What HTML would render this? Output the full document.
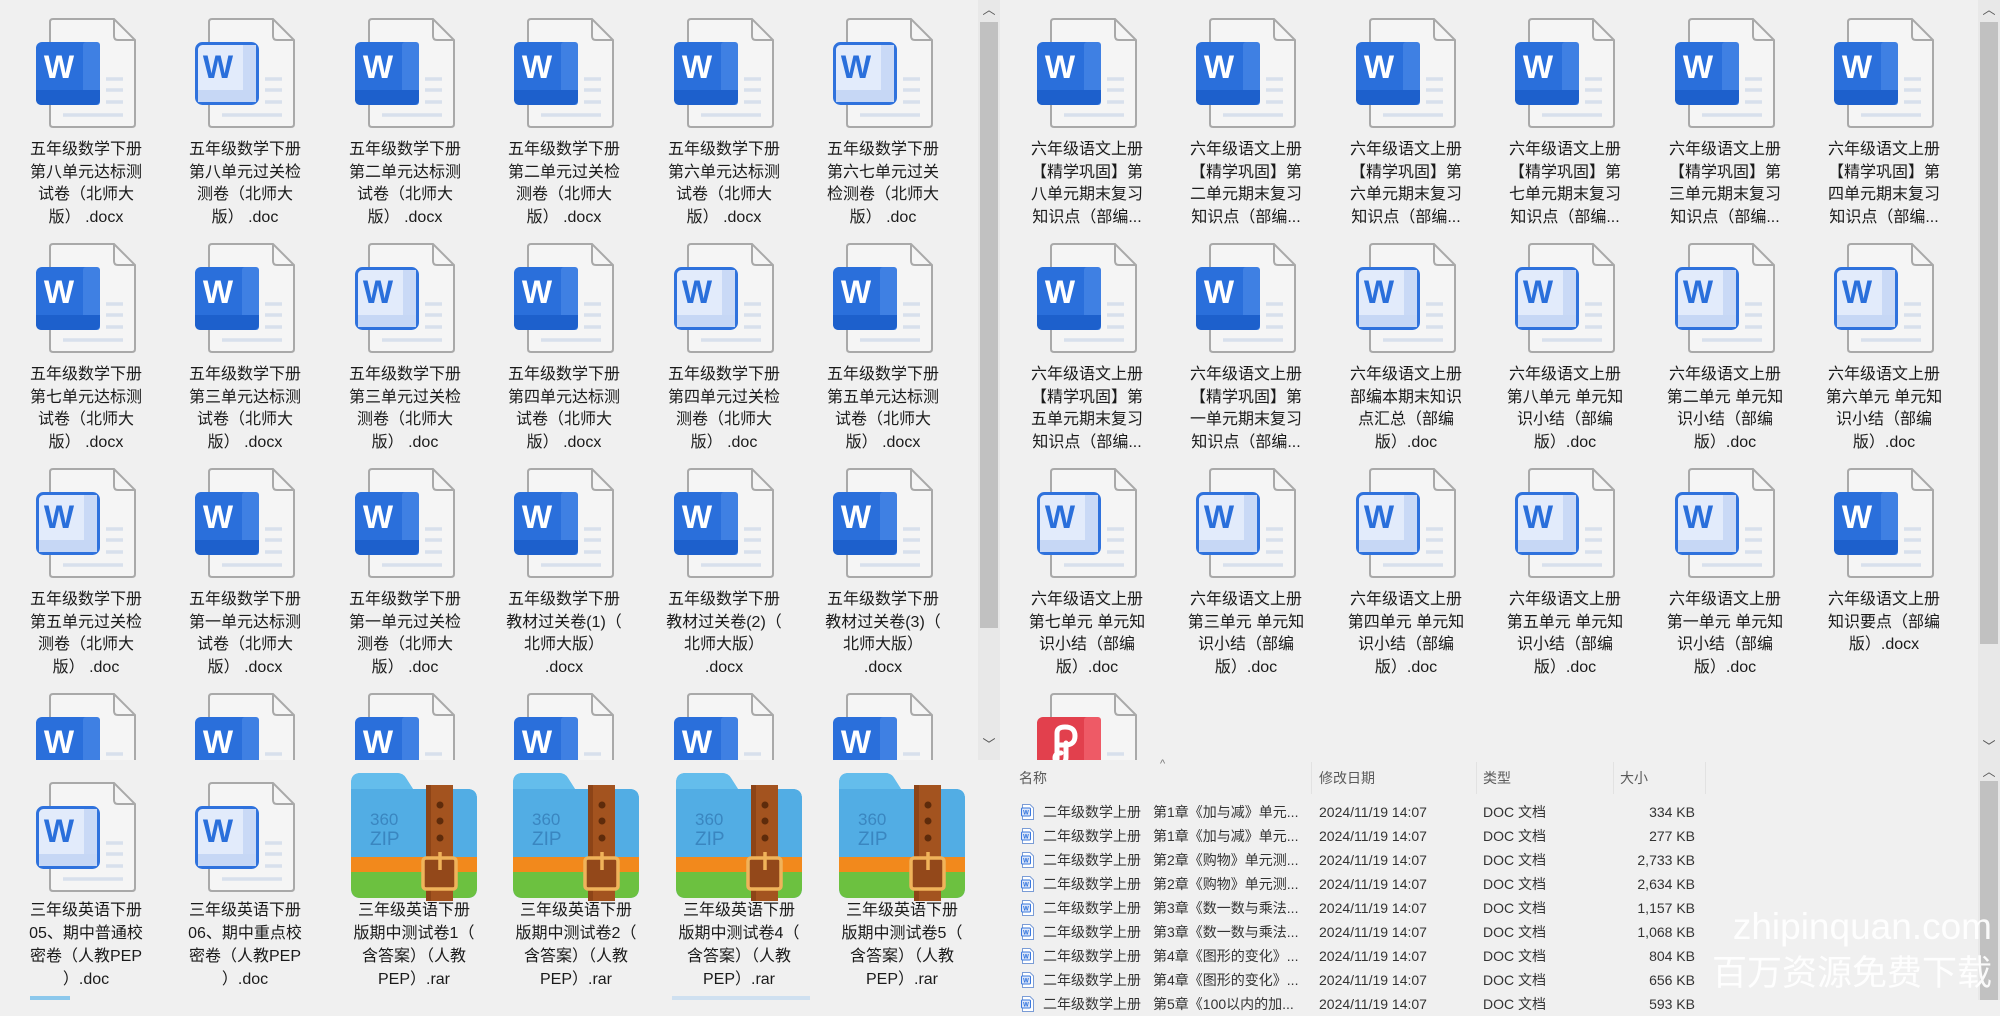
<!DOCTYPE html>
<html><head><meta charset="utf-8">
<style>
*{margin:0;padding:0;box-sizing:border-box}
body{width:2000px;height:1000px;background:#f0f0f0;position:relative;overflow:hidden;font-family:"Liberation Sans","Noto Sans CJK SC",sans-serif;color:#1a1a1a}
.pane{position:absolute;overflow:hidden}
.ic{position:absolute;width:100px;height:112px}
.zp{position:absolute;width:126px;height:128px}
.lb{position:absolute;width:170px;text-align:center;font-size:16px;line-height:22.5px;white-space:nowrap}
.sb{position:absolute;background:#e8e8e8}
.th{position:absolute;background:#c1c1c1}
.ar{position:absolute;font-size:13px;color:#555;width:22px;text-align:center;line-height:14px}
.row{position:absolute;left:0;width:2000px;height:24px;font-size:14px;line-height:24px;color:#333;white-space:nowrap}
.row span{position:absolute}
.hd{position:absolute;top:766px;font-size:14px;color:#5a5a5a;line-height:24px}
.sep{position:absolute;top:762px;width:1px;height:32px;background:#e2e2e2}
</style></head><body>
<svg width="0" height="0" style="position:absolute">
<defs>
<symbol id="pg" viewBox="0 0 100 112">
<path d="M14,4 q0,-3 3,-3 H78 L99,22 V106 q0,3 -3,3 H17 q-3,0 -3,-3 Z" fill="#f5f5f5" stroke="#a9a9a9" stroke-width="2"/>
<path d="M78,1 V18 q0,4 4,4 H99" fill="none" stroke="#a9a9a9" stroke-width="2"/>
<path d="M70,61 H87 M70,72 H87 M70,84 H87 M27,97 H87" stroke="#d8e0ec" stroke-width="3.5"/>
</symbol>
<symbol id="doc" viewBox="0 0 100 112">
<use href="#pg"/>
<rect x="0" y="24" width="64" height="63" rx="6" fill="#2a6fdb"/>
<rect x="47" y="24" width="17" height="63" rx="3" fill="#3f80e3"/>
<path d="M0,72 H64 V81 q0,6 -6,6 H6 q-6,0 -6,-6 Z" fill="#1d60cc"/>
<text x="23" y="60" text-anchor="middle" font-family="Liberation Sans" font-weight="bold" font-size="32" fill="#fff">W</text>
</symbol>
<symbol id="doco" viewBox="0 0 100 112">
<use href="#pg"/>
<rect x="1.5" y="25.5" width="61" height="60" rx="6" fill="#e2ebfb" stroke="#2f72dd" stroke-width="3"/>
<rect x="48" y="27" width="13" height="57" fill="#c9d9f6"/>
<rect x="3" y="72" width="58" height="12" fill="#c6d7f5"/>
<text x="23" y="60" text-anchor="middle" font-family="Liberation Sans" font-weight="bold" font-size="32" fill="#2a6fdb">W</text>
</symbol>
<symbol id="pdf" viewBox="0 0 100 112">
<use href="#pg"/>
<rect x="0" y="24" width="64" height="63" rx="6" fill="#e2404d"/>
<rect x="47" y="24" width="17" height="63" rx="3" fill="#ee5a66"/>
<path d="M20,66 V40 q0,-6 8,-6 q10,0 10,9 q0,9 -10,9 h-6 M24,60 q-6,0 -6,5 q0,5 6,5 q5,0 5,-6 V50" fill="none" stroke="#fff" stroke-width="5" stroke-linecap="round"/>
</symbol>
<symbol id="zip" viewBox="0 0 126 128">
<clipPath id="zc"><path d="M0,10 q0,-10 10,-10 H46 q6,0 9,5 L62,16 H116 q10,0 10,10 V115 q0,10 -10,10 H10 q-10,0 -10,-10 Z"/></clipPath>
<g clip-path="url(#zc)">
<rect width="126" height="128" fill="#56b1e6"/>
<rect y="0" width="126" height="30" fill="#64bdec"/>
<rect y="16" width="126" height="68" fill="#52ade4"/>
<rect y="84" width="126" height="16" fill="#f2891c"/>
<rect y="99" width="126" height="29" fill="#6cc140"/>
</g>
<rect x="75" y="12" width="27" height="116" fill="#a3531f"/>
<rect x="75" y="12" width="5" height="116" fill="#8d4417"/>
<circle cx="89" cy="32" r="3.5" fill="#5e2b0b"/><circle cx="89" cy="48" r="3.5" fill="#5e2b0b"/><circle cx="89" cy="65" r="3.5" fill="#5e2b0b"/>
<rect x="72" y="85" width="33" height="31" rx="3" fill="#93481a" stroke="#f0b35a" stroke-width="3.5"/>
<path d="M89,79 V97" stroke="#f0b35a" stroke-width="3.5"/>
<text x="19" y="52" font-family="Liberation Sans" font-size="17" fill="#3a86c0">360</text>
<text x="19" y="72" font-family="Liberation Sans" font-size="19" fill="#3a86c0">ZIP</text>
</symbol>
<symbol id="sm" viewBox="0 0 14 18">
<path d="M1.5,1.5 H9 L12.5,5 V16.5 H1.5 Z" fill="#fff" stroke="#7a9cd6" stroke-width="1"/>
<rect x="0.5" y="5" width="9" height="8" rx="1" fill="#dbe6fa" stroke="#3a78de" stroke-width="1"/>
<text x="5" y="11.5" text-anchor="middle" font-family="Liberation Sans" font-weight="bold" font-size="6" fill="#2a6fdb">W</text>
</symbol>
</defs></svg>

<!-- LEFT TOP PANE -->
<div class="pane" style="left:0;top:0;width:978px;height:760px">
<svg class="ic" style="left:36px;top:18px"><use href="#doc"/></svg>
<svg class="ic" style="left:195px;top:18px"><use href="#doco"/></svg>
<svg class="ic" style="left:355px;top:18px"><use href="#doc"/></svg>
<svg class="ic" style="left:514px;top:18px"><use href="#doc"/></svg>
<svg class="ic" style="left:674px;top:18px"><use href="#doc"/></svg>
<svg class="ic" style="left:833px;top:18px"><use href="#doco"/></svg>
<div class="lb" style="left:1px;top:139px">五年级数学下册<br>第八单元达标测<br>试卷（北师大<br>版） .docx</div>
<div class="lb" style="left:160px;top:139px">五年级数学下册<br>第八单元过关检<br>测卷（北师大<br>版） .doc</div>
<div class="lb" style="left:320px;top:139px">五年级数学下册<br>第二单元达标测<br>试卷（北师大<br>版） .docx</div>
<div class="lb" style="left:479px;top:139px">五年级数学下册<br>第二单元过关检<br>测卷（北师大<br>版） .docx</div>
<div class="lb" style="left:639px;top:139px">五年级数学下册<br>第六单元达标测<br>试卷（北师大<br>版） .docx</div>
<div class="lb" style="left:798px;top:139px">五年级数学下册<br>第六七单元过关<br>检测卷（北师大<br>版） .doc</div>

<svg class="ic" style="left:36px;top:243px"><use href="#doc"/></svg>
<svg class="ic" style="left:195px;top:243px"><use href="#doc"/></svg>
<svg class="ic" style="left:355px;top:243px"><use href="#doco"/></svg>
<svg class="ic" style="left:514px;top:243px"><use href="#doc"/></svg>
<svg class="ic" style="left:674px;top:243px"><use href="#doco"/></svg>
<svg class="ic" style="left:833px;top:243px"><use href="#doc"/></svg>
<div class="lb" style="left:1px;top:364px">五年级数学下册<br>第七单元达标测<br>试卷（北师大<br>版） .docx</div>
<div class="lb" style="left:160px;top:364px">五年级数学下册<br>第三单元达标测<br>试卷（北师大<br>版） .docx</div>
<div class="lb" style="left:320px;top:364px">五年级数学下册<br>第三单元过关检<br>测卷（北师大<br>版） .doc</div>
<div class="lb" style="left:479px;top:364px">五年级数学下册<br>第四单元达标测<br>试卷（北师大<br>版） .docx</div>
<div class="lb" style="left:639px;top:364px">五年级数学下册<br>第四单元过关检<br>测卷（北师大<br>版） .doc</div>
<div class="lb" style="left:798px;top:364px">五年级数学下册<br>第五单元达标测<br>试卷（北师大<br>版） .docx</div>

<svg class="ic" style="left:36px;top:468px"><use href="#doco"/></svg>
<svg class="ic" style="left:195px;top:468px"><use href="#doc"/></svg>
<svg class="ic" style="left:355px;top:468px"><use href="#doc"/></svg>
<svg class="ic" style="left:514px;top:468px"><use href="#doc"/></svg>
<svg class="ic" style="left:674px;top:468px"><use href="#doc"/></svg>
<svg class="ic" style="left:833px;top:468px"><use href="#doc"/></svg>
<div class="lb" style="left:1px;top:589px">五年级数学下册<br>第五单元过关检<br>测卷（北师大<br>版） .doc</div>
<div class="lb" style="left:160px;top:589px">五年级数学下册<br>第一单元达标测<br>试卷（北师大<br>版） .docx</div>
<div class="lb" style="left:320px;top:589px">五年级数学下册<br>第一单元过关检<br>测卷（北师大<br>版） .doc</div>
<div class="lb" style="left:479px;top:589px">五年级数学下册<br>教材过关卷(1)（<br>北师大版）<br>.docx</div>
<div class="lb" style="left:639px;top:589px">五年级数学下册<br>教材过关卷(2)（<br>北师大版）<br>.docx</div>
<div class="lb" style="left:798px;top:589px">五年级数学下册<br>教材过关卷(3)（<br>北师大版）<br>.docx</div>

<svg class="ic" style="left:36px;top:693px"><use href="#doc"/></svg>
<svg class="ic" style="left:195px;top:693px"><use href="#doc"/></svg>
<svg class="ic" style="left:355px;top:693px"><use href="#doc"/></svg>
<svg class="ic" style="left:514px;top:693px"><use href="#doc"/></svg>
<svg class="ic" style="left:674px;top:693px"><use href="#doc"/></svg>
<svg class="ic" style="left:833px;top:693px"><use href="#doc"/></svg>
</div>
<div class="sb" style="left:978px;top:0;width:22px;height:760px"></div>
<div class="th" style="left:980px;top:22px;width:18px;height:606px"></div>
<div class="ar" style="left:978px;top:3px">︿</div>
<div class="ar" style="left:978px;top:738px">﹀</div>

<!-- RIGHT TOP PANE -->
<div class="pane" style="left:1000px;top:0;width:978px;height:760px">
<svg class="ic" style="left:37px;top:18px"><use href="#doc"/></svg>
<svg class="ic" style="left:196px;top:18px"><use href="#doc"/></svg>
<svg class="ic" style="left:356px;top:18px"><use href="#doc"/></svg>
<svg class="ic" style="left:515px;top:18px"><use href="#doc"/></svg>
<svg class="ic" style="left:675px;top:18px"><use href="#doc"/></svg>
<svg class="ic" style="left:834px;top:18px"><use href="#doc"/></svg>
<div class="lb" style="left:2px;top:139px">六年级语文上册<br>【精学巩固】第<br>八单元期末复习<br>知识点（部编...</div>
<div class="lb" style="left:161px;top:139px">六年级语文上册<br>【精学巩固】第<br>二单元期末复习<br>知识点（部编...</div>
<div class="lb" style="left:321px;top:139px">六年级语文上册<br>【精学巩固】第<br>六单元期末复习<br>知识点（部编...</div>
<div class="lb" style="left:480px;top:139px">六年级语文上册<br>【精学巩固】第<br>七单元期末复习<br>知识点（部编...</div>
<div class="lb" style="left:640px;top:139px">六年级语文上册<br>【精学巩固】第<br>三单元期末复习<br>知识点（部编...</div>
<div class="lb" style="left:799px;top:139px">六年级语文上册<br>【精学巩固】第<br>四单元期末复习<br>知识点（部编...</div>

<svg class="ic" style="left:37px;top:243px"><use href="#doc"/></svg>
<svg class="ic" style="left:196px;top:243px"><use href="#doc"/></svg>
<svg class="ic" style="left:356px;top:243px"><use href="#doco"/></svg>
<svg class="ic" style="left:515px;top:243px"><use href="#doco"/></svg>
<svg class="ic" style="left:675px;top:243px"><use href="#doco"/></svg>
<svg class="ic" style="left:834px;top:243px"><use href="#doco"/></svg>
<div class="lb" style="left:2px;top:364px">六年级语文上册<br>【精学巩固】第<br>五单元期末复习<br>知识点（部编...</div>
<div class="lb" style="left:161px;top:364px">六年级语文上册<br>【精学巩固】第<br>一单元期末复习<br>知识点（部编...</div>
<div class="lb" style="left:321px;top:364px">六年级语文上册<br>部编本期末知识<br>点汇总（部编<br>版）.doc</div>
<div class="lb" style="left:480px;top:364px">六年级语文上册<br>第八单元 单元知<br>识小结（部编<br>版）.doc</div>
<div class="lb" style="left:640px;top:364px">六年级语文上册<br>第二单元 单元知<br>识小结（部编<br>版）.doc</div>
<div class="lb" style="left:799px;top:364px">六年级语文上册<br>第六单元 单元知<br>识小结（部编<br>版）.doc</div>

<svg class="ic" style="left:37px;top:468px"><use href="#doco"/></svg>
<svg class="ic" style="left:196px;top:468px"><use href="#doco"/></svg>
<svg class="ic" style="left:356px;top:468px"><use href="#doco"/></svg>
<svg class="ic" style="left:515px;top:468px"><use href="#doco"/></svg>
<svg class="ic" style="left:675px;top:468px"><use href="#doco"/></svg>
<svg class="ic" style="left:834px;top:468px"><use href="#doc"/></svg>
<div class="lb" style="left:2px;top:589px">六年级语文上册<br>第七单元 单元知<br>识小结（部编<br>版）.doc</div>
<div class="lb" style="left:161px;top:589px">六年级语文上册<br>第三单元 单元知<br>识小结（部编<br>版）.doc</div>
<div class="lb" style="left:321px;top:589px">六年级语文上册<br>第四单元 单元知<br>识小结（部编<br>版）.doc</div>
<div class="lb" style="left:480px;top:589px">六年级语文上册<br>第五单元 单元知<br>识小结（部编<br>版）.doc</div>
<div class="lb" style="left:640px;top:589px">六年级语文上册<br>第一单元 单元知<br>识小结（部编<br>版）.doc</div>
<div class="lb" style="left:799px;top:589px">六年级语文上册<br>知识要点（部编<br>版）.docx</div>

<svg class="ic" style="left:37px;top:693px"><use href="#pdf"/></svg>
</div>
<div class="sb" style="left:1978px;top:0;width:22px;height:762px"></div>
<div class="th" style="left:1980px;top:22px;width:18px;height:622px"></div>
<div class="ar" style="left:1978px;top:3px">︿</div>
<div class="ar" style="left:1978px;top:740px">﹀</div>

<!-- BOTTOM LEFT PANE -->
<div class="pane" style="left:0;top:762px;width:1000px;height:238px">
<svg class="ic" style="left:36px;top:20px"><use href="#doco"/></svg>
<svg class="ic" style="left:195px;top:20px"><use href="#doco"/></svg>
<svg class="zp" style="left:351px;top:11px"><use href="#zip"/></svg>
<svg class="zp" style="left:513px;top:11px"><use href="#zip"/></svg>
<svg class="zp" style="left:676px;top:11px"><use href="#zip"/></svg>
<svg class="zp" style="left:839px;top:11px"><use href="#zip"/></svg>
<div class="lb" style="left:1px;top:137px;line-height:23px">三年级英语下册<br>05、期中普通校<br>密卷（人教PEP<br>）.doc</div>
<div class="lb" style="left:160px;top:137px;line-height:23px">三年级英语下册<br>06、期中重点校<br>密卷（人教PEP<br>）.doc</div>
<div class="lb" style="left:329px;top:137px;line-height:23px">三年级英语下册<br>版期中测试卷1（<br>含答案）（人教<br>PEP）.rar</div>
<div class="lb" style="left:491px;top:137px;line-height:23px">三年级英语下册<br>版期中测试卷2（<br>含答案）（人教<br>PEP）.rar</div>
<div class="lb" style="left:654px;top:137px;line-height:23px">三年级英语下册<br>版期中测试卷4（<br>含答案）（人教<br>PEP）.rar</div>
<div class="lb" style="left:817px;top:137px;line-height:23px">三年级英语下册<br>版期中测试卷5（<br>含答案）（人教<br>PEP）.rar</div>
<div style="position:absolute;left:30px;top:234px;width:40px;height:6px;background:#8cc8ec"></div>
<div style="position:absolute;left:672px;top:234px;width:138px;height:6px;background:#cfe0f0"></div>
</div>

<!-- BOTTOM RIGHT DETAILS -->
<div style="position:absolute;left:1160px;top:758px;font-size:11px;color:#777">^</div>
<div class="hd" style="left:1019px">名称</div>
<div class="hd" style="left:1319px">修改日期</div>
<div class="hd" style="left:1483px">类型</div>
<div class="hd" style="left:1620px">大小</div>
<div class="sep" style="left:1311px"></div>
<div class="sep" style="left:1476px"></div>
<div class="sep" style="left:1613px"></div>
<div class="sep" style="left:1705px"></div>

<div class="row" style="top:800px"><svg style="position:absolute;left:1021px;top:3px;width:14px;height:18px"><use href="#sm"/></svg><span style="left:1043px">二年级数学上册</span><span style="left:1153px;width:146px;overflow:hidden">第1章《加与减》单元...</span><span style="left:1319px">2024/11/19 14:07</span><span style="left:1483px">DOC 文档</span><span style="right:305px">334 KB</span></div>
<div class="row" style="top:824px"><svg style="position:absolute;left:1021px;top:3px;width:14px;height:18px"><use href="#sm"/></svg><span style="left:1043px">二年级数学上册</span><span style="left:1153px;width:146px;overflow:hidden">第1章《加与减》单元...</span><span style="left:1319px">2024/11/19 14:07</span><span style="left:1483px">DOC 文档</span><span style="right:305px">277 KB</span></div>
<div class="row" style="top:848px"><svg style="position:absolute;left:1021px;top:3px;width:14px;height:18px"><use href="#sm"/></svg><span style="left:1043px">二年级数学上册</span><span style="left:1153px;width:146px;overflow:hidden">第2章《购物》单元测...</span><span style="left:1319px">2024/11/19 14:07</span><span style="left:1483px">DOC 文档</span><span style="right:305px">2,733 KB</span></div>
<div class="row" style="top:872px"><svg style="position:absolute;left:1021px;top:3px;width:14px;height:18px"><use href="#sm"/></svg><span style="left:1043px">二年级数学上册</span><span style="left:1153px;width:146px;overflow:hidden">第2章《购物》单元测...</span><span style="left:1319px">2024/11/19 14:07</span><span style="left:1483px">DOC 文档</span><span style="right:305px">2,634 KB</span></div>
<div class="row" style="top:896px"><svg style="position:absolute;left:1021px;top:3px;width:14px;height:18px"><use href="#sm"/></svg><span style="left:1043px">二年级数学上册</span><span style="left:1153px;width:146px;overflow:hidden">第3章《数一数与乘法...</span><span style="left:1319px">2024/11/19 14:07</span><span style="left:1483px">DOC 文档</span><span style="right:305px">1,157 KB</span></div>
<div class="row" style="top:920px"><svg style="position:absolute;left:1021px;top:3px;width:14px;height:18px"><use href="#sm"/></svg><span style="left:1043px">二年级数学上册</span><span style="left:1153px;width:146px;overflow:hidden">第3章《数一数与乘法...</span><span style="left:1319px">2024/11/19 14:07</span><span style="left:1483px">DOC 文档</span><span style="right:305px">1,068 KB</span></div>
<div class="row" style="top:944px"><svg style="position:absolute;left:1021px;top:3px;width:14px;height:18px"><use href="#sm"/></svg><span style="left:1043px">二年级数学上册</span><span style="left:1153px;width:146px;overflow:hidden">第4章《图形的变化》...</span><span style="left:1319px">2024/11/19 14:07</span><span style="left:1483px">DOC 文档</span><span style="right:305px">804 KB</span></div>
<div class="row" style="top:968px"><svg style="position:absolute;left:1021px;top:3px;width:14px;height:18px"><use href="#sm"/></svg><span style="left:1043px">二年级数学上册</span><span style="left:1153px;width:146px;overflow:hidden">第4章《图形的变化》...</span><span style="left:1319px">2024/11/19 14:07</span><span style="left:1483px">DOC 文档</span><span style="right:305px">656 KB</span></div>
<div class="row" style="top:992px"><svg style="position:absolute;left:1021px;top:3px;width:14px;height:18px"><use href="#sm"/></svg><span style="left:1043px">二年级数学上册</span><span style="left:1153px;width:146px;overflow:hidden">第5章《100以内的加...</span><span style="left:1319px">2024/11/19 14:07</span><span style="left:1483px">DOC 文档</span><span style="right:305px">593 KB</span></div>

<div class="sb" style="left:1978px;top:762px;width:22px;height:238px"></div>
<div class="th" style="left:1980px;top:781px;width:18px;height:219px"></div>
<div class="ar" style="left:1978px;top:765px">︿</div>

<!-- WATERMARK -->
<div style="position:absolute;right:8px;top:903px;width:400px;text-align:right;font-size:37px;line-height:48px;color:rgba(255,255,255,0.92);font-family:'Liberation Sans',sans-serif;white-space:nowrap">zhipinquan.com</div>
<div style="position:absolute;right:8px;top:953px;width:400px;text-align:right;font-size:35px;line-height:42px;color:rgba(255,255,255,0.92);font-family:'Liberation Sans','Noto Sans CJK SC',sans-serif;white-space:nowrap">百万资源免费下载</div>
</body></html>
